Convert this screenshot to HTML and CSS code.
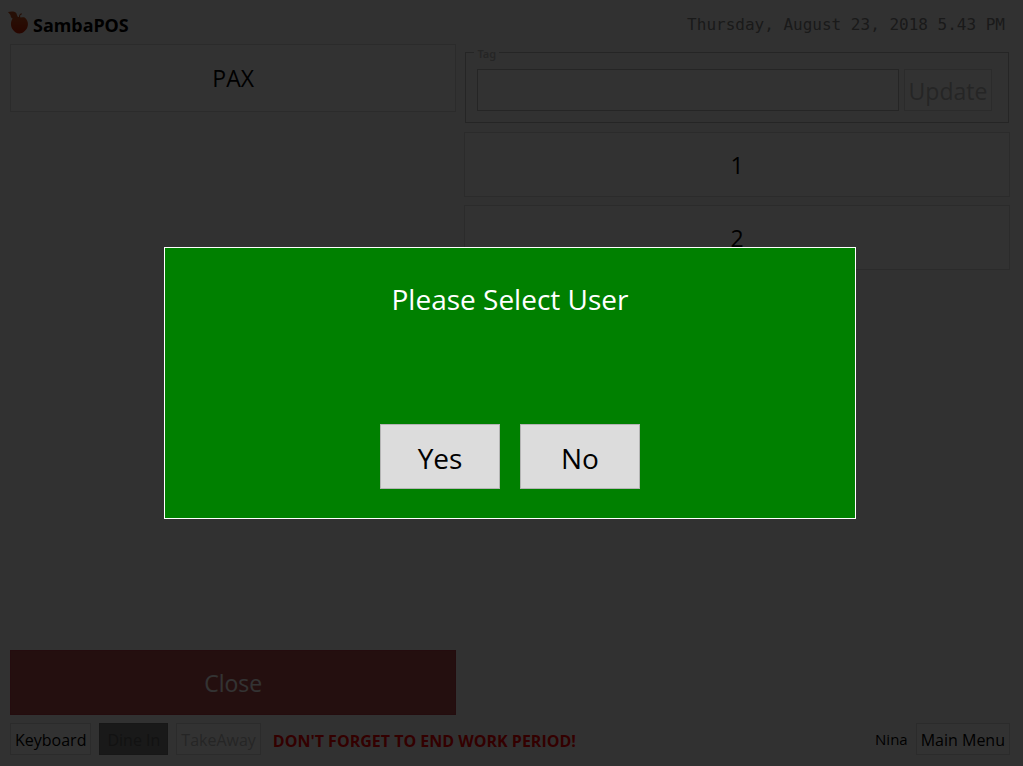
FILE: index.html
```
<!DOCTYPE html>
<html lang="en">
<head>
  <meta charset="UTF-8">
  <meta name="viewport" content="width=device-width, initial-scale=1.0">
  <title>SambaPOS</title>
  <link rel="stylesheet" href="styles.css">
</head>
<body>

  <header class="top-bar">
    <div class="brand">
      <svg class="logo" viewBox="0 0 24 26" aria-hidden="true">
        <defs>
          <linearGradient id="fruit" x1="0" y1="0" x2="0" y2="1">
            <stop offset="0" stop-color="#c8501e"/>
            <stop offset="1" stop-color="#c81e00"/>
          </linearGradient>
        </defs>
        <path fill="url(#fruit)" d="M14 7C11 6 6 5 4 10C2 15 4 20 8 23C11 25 15 25 18 22C22 19 23 13 20 9C18 6 16 7 14 7Z"/>
        <path fill="#be4b1e" d="M0 1C3 0 7 0 9 2C10 4 10 6 12 8C8 10 4 9 3 6C3 3 1 3 0 1Z"/>
        <path fill="none" stroke="#b44619" stroke-width="1.2" d="M13 8C12 5 13 3 15 3"/>
      </svg>
      <strong class="brand-name">SambaPOS</strong>
    </div>
    <time class="clock" datetime="2018-08-23T17:43">Thursday, August 23, 2018 5.43 PM</time>
  </header>

  <main class="content">
    <section class="left">
      <button class="tile pax">PAX</button>
      <button class="tile close">Close</button>
    </section>

    <section class="right">
      <fieldset class="tag-box">
        <legend><label for="tag">Tag</label></legend>
        <input type="text" id="tag">
        <button class="update" disabled>Update</button>
      </fieldset>
      <button class="tile">1</button>
      <button class="tile">2</button>
    </section>
  </main>

  <footer class="bottom-bar">
    <button class="small">Keyboard</button>
    <button class="small active" disabled>Dine In</button>
    <button class="small" disabled>TakeAway</button>
    <strong class="warning">DON'T FORGET TO END WORK PERIOD!</strong>
    <span class="user">Nina</span>
    <button class="small">Main Menu</button>
  </footer>

  <div class="overlay">
    <div class="dialog" role="dialog" aria-modal="true" aria-labelledby="dialogTitle">
      <h1 id="dialogTitle">Please Select User</h1>
      <div class="dialog-buttons">
        <button>Yes</button>
        <button>No</button>
      </div>
    </div>
  </div>

</body>
</html>
```
FILE: styles.css
```
* {
  box-sizing: border-box;
}
body {
  margin: 0;
  min-height: 100vh;
  display: flex;
  flex-direction: column;
  padding: 8px 13px 11px 10px;
  background: #f5f5f5;
  color: #000;
  font-family: "Open Sans", "Segoe UI", sans-serif;
  font-size: 16px;
}
button {
  font-family: inherit;
  color: #000;
  background: #fafafa;
  border: 1px solid #d8d8d8;
  padding: 0;
}
button:disabled {
  color: #b9b9b9;
}

/* header */
.top-bar {
  display: flex;
  justify-content: space-between;
  height: 36px;
  padding-right: 5px;
}
.brand {
  display: flex;
  align-items: flex-start;
  gap: 3px;
  margin-left: -2px;
}
.logo {
  width: 22px;
  height: 26px;
  margin-top: 2px;
}
.brand-name {
  font-family: "Noto Sans", sans-serif;
  font-size: 18px;
  line-height: 34px;
}
.clock {
  font-family: "DejaVu Sans Mono", Consolas, monospace;
  font-size: 16px;
  line-height: 34px;
  color: #808080;
}

/* two columns */
.content {
  flex: 1;
  display: grid;
  grid-template-columns: 45fr 55fr;
  gap: 8px;
}
.left,
.right {
  display: flex;
  flex-direction: column;
  gap: 8px;
}
.left {
  justify-content: space-between;
}
.tile {
  height: 65px;
  font-size: 23px;
}
.pax {
  height: 68px;
}
.close {
  background: #b44b4b;
  border-color: #b43c46;
  color: #fff;
}

.tag-box {
  display: flex;
  gap: 5px;
  height: 79px;
  margin: 0 1px 1px;
  padding: 8px 16px 11px 11px;
  border: 1px solid #b9b9b9;
}
.tag-box legend {
  margin-left: -3px;
  padding: 2px 3px 0;
  font-family: "Noto Sans", sans-serif;
  font-size: 11px;
  line-height: 15px;
  font-weight: 600;
  color: #b9b9b9;
}
.tag-box input {
  flex: 1;
  min-width: 0;
  height: 42px;
  font-size: 23px;
  background: #fafafa;
  border: 1px solid #b9b9b9;
}
.update {
  width: 88px;
  height: 42px;
  padding-top: 2px;
  font-size: 23px;
}

/* footer */
.bottom-bar {
  display: flex;
  align-items: center;
  gap: 8px;
  margin-top: 8px;
}
.small {
  height: 32px;
  padding: 2px 4px 0;
  font-size: 16px;
}
.small.active {
  padding: 2px 7px 0;
  background: #7d7d7d;
  border-color: #737373;
  color: #5a5a5a;
}
.warning {
  margin-left: 4px;
  padding-top: 3px;
  font-size: 16px;
  line-height: 20px;
  color: #f00;
}
.user {
  margin-left: auto;
  font-size: 15px;
}

/* message box */
.overlay {
  position: fixed;
  inset: 0;
  display: flex;
  align-items: center;
  justify-content: center;
  padding-right: 3px;
  background: rgba(0, 0, 0, 0.8);
}
.dialog {
  display: flex;
  flex-direction: column;
  justify-content: space-between;
  align-items: center;
  width: 90%;
  max-width: 692px;
  min-height: 272px;
  padding: 31px 20px 29px;
  background: #008000;
  border: 1px solid #fff;
}
.dialog h1 {
  margin: 0;
  font-size: 28px;
  line-height: 40px;
  font-weight: 400;
  color: #fff;
}
.dialog-buttons {
  display: flex;
  gap: 20px;
}
.dialog-buttons button {
  width: 120px;
  height: 65px;
  padding-top: 3px;
  font-size: 28px;
  background: #dcdcdc;
  border-color: #b4b4b4;
}
```
